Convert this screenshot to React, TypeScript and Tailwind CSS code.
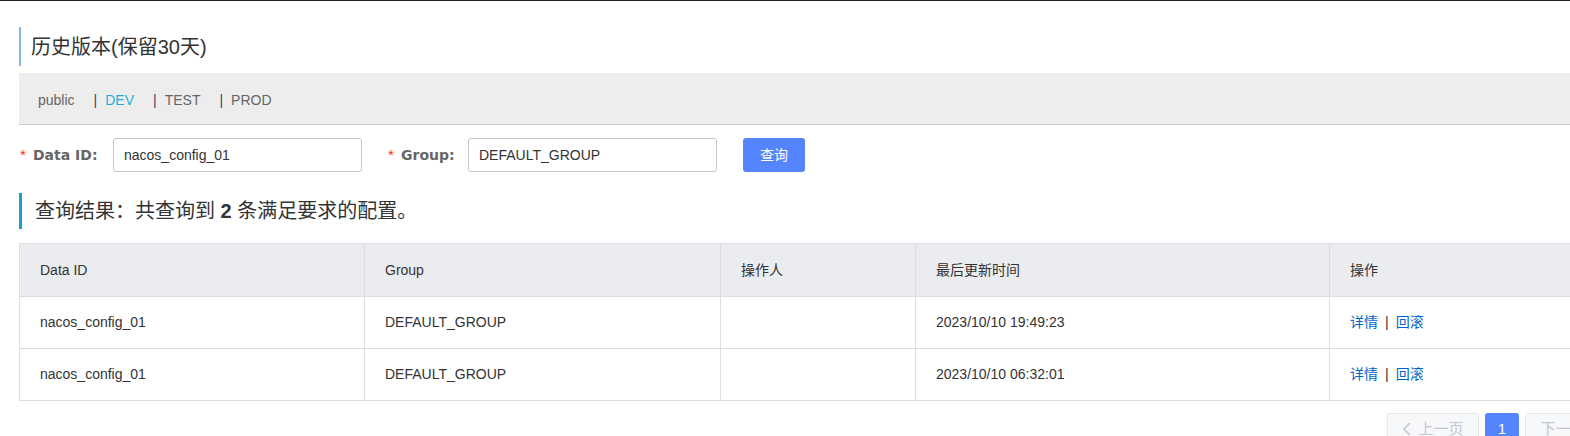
import React from "react";

const font = "font-['Liberation_Sans','Noto_Sans_CJK_SC',sans-serif]";

const rows = [
    { dataId: "nacos_config_01", group: "DEFAULT_GROUP", op: "", time: "2023/10/10 19:49:23" },
    { dataId: "nacos_config_01", group: "DEFAULT_GROUP", op: "", time: "2023/10/10 06:32:01" },
];

const cols = "grid grid-cols-[344px_356px_195px_414px_300px]";

function FormField({ label, value, labelW }: { label: string; value: string; labelW: string }) {
    return (
        <div className="flex items-center shrink-0">
            <span className="text-[#ff3000] text-[15px] w-[13px] shrink-0">*</span>
            <span className={`${labelW} shrink-0 text-[#666] text-[14px] font-bold font-['DejaVu_Sans',sans-serif]`}>
                {label}
            </span>
            <div className="w-[249px] h-[34px] border border-[#c4c6cf] rounded-[3px] flex items-center px-[10px] text-[14px] text-[#333]">
                {value}
            </div>
        </div>
    );
}

export default function App() {
    return (
        <div className={`${font} w-[1570px] h-[436px] overflow-hidden bg-white border-t border-[#222]`}>
            <div className="pl-[19px]">
                {/* title */}
                <div className="mt-[26px] h-[39px] border-l-2 border-[#88b8e0] pl-[10px] flex items-center text-[20px] text-[#333]">
                    历史版本(保留30天)
                </div>

                {/* namespace tabs */}
                <div className="mt-[7px] h-[52px] bg-[#ededed] border-b border-[#cccccc] flex items-center pl-[19px] pt-[3px] text-[14px] text-[#666] gap-[19px]">
                    <span>public</span>
                    <span>
                        <span className="text-[#34495e] mr-[8px]">|</span>
                        <span className="text-[#1cb0d8]">DEV</span>
                    </span>
                    <span>
                        <span className="text-[#34495e] mr-[8px]">|</span>
                        TEST
                    </span>
                    <span>
                        <span className="text-[#34495e] mr-[8px]">|</span>
                        PROD
                    </span>
                </div>

                {/* query form */}
                <div className="mt-[13px] flex items-center pl-[1px]">
                    <FormField label="Data ID:" value="nacos_config_01" labelW="w-[80px]" />
                    <div className="ml-[26px] shrink-0">
                        <FormField label="Group:" value="DEFAULT_GROUP" labelW="w-[67px]" />
                    </div>
                    <button className="ml-[26px] shrink-0 w-[62px] h-[34px] rounded-[3px] bg-[#5584ff] text-white text-[14px]">
                        查询
                    </button>
                </div>

                {/* result heading */}
                <div className="mt-[21px] h-[36px] border-l-[3px] border-[#1a9dd0] pl-[13px] flex items-center text-[20px] text-[#333]">
                    查询结果：共查询到&nbsp;<b>2</b>&nbsp;条满足要求的配置。
                </div>

                {/* table */}
                <div className="mt-[14px] w-[1609px] border border-[#dcdee3] text-[14px] text-[#333]">
                    <div className={`${cols} bg-[#ebecf0] h-[52px]`}>
                        {["Data ID", "Group", "操作人", "最后更新时间", "操作"].map((h, i) => (
                            <div key={h} className={`flex items-center pl-[20px] ${i > 0 ? "border-l border-[#dcdee3]" : ""}`}>
                                {h}
                            </div>
                        ))}
                    </div>
                    {rows.map((r, idx) => (
                        <div key={idx} className={`${cols} h-[52px] border-t border-[#dcdee3]`}>
                            <div className="flex items-center pl-[20px]">{r.dataId}</div>
                            <div className="flex items-center pl-[20px] border-l border-[#dcdee3]">{r.group}</div>
                            <div className="flex items-center pl-[20px] border-l border-[#dcdee3]">{r.op}</div>
                            <div className="flex items-center pl-[20px] border-l border-[#dcdee3]">{r.time}</div>
                            <div className="flex items-center pl-[20px] border-l border-[#dcdee3]">
                                <span className="text-[#0064c8]">详情</span>
                                <span className="mx-[7px] text-[#333]">|</span>
                                <span className="text-[#0064c8]">回滚</span>
                            </div>
                        </div>
                    ))}
                </div>

                {/* pagination */}
                <div className="mt-[12px] flex pl-[1368px] gap-[6px] text-[15px]">
                    <div className="shrink-0 w-[92px] h-[32px] border border-[#e6e7eb] bg-[#f7f8fa] rounded-[3px] flex items-center justify-center text-[#c4c6cf] gap-[6px]">
                        <svg width="10" height="16" viewBox="0 0 10 16" fill="none" stroke="#c4c6cf" strokeWidth="1.5">
                            <path d="M8 2 L2 8 L8 14" />
                        </svg>
                        上一页
                    </div>
                    <div className="shrink-0 w-[34px] h-[32px] rounded-[3px] bg-[#5584ff] text-white flex items-center justify-center">
                        1
                    </div>
                    <div className="shrink-0 w-[92px] h-[32px] border border-[#e6e7eb] bg-[#f7f8fa] rounded-[3px] flex items-center justify-center text-[#c4c6cf] gap-[6px]">
                        下一页
                        <svg width="10" height="16" viewBox="0 0 10 16" fill="none" stroke="#c4c6cf" strokeWidth="1.5">
                            <path d="M2 2 L8 8 L2 14" />
                        </svg>
                    </div>
                </div>
            </div>
        </div>
    );
}
